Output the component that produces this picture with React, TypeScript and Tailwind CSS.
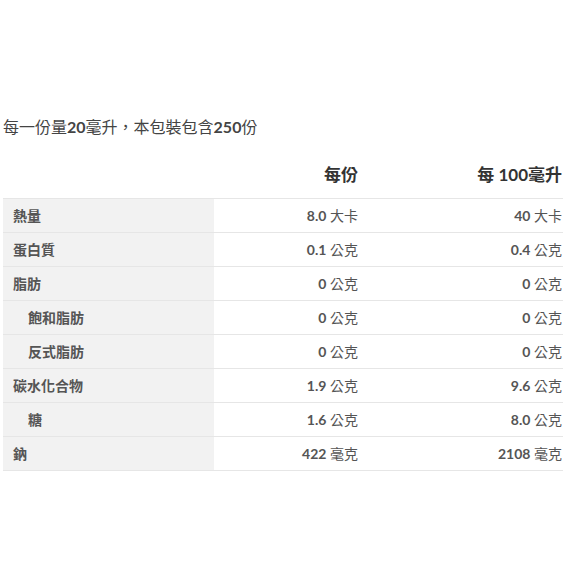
const rows: { label: string; indent?: boolean; per: [string, string]; per100: [string, string] }[] = [
  { label: "熱量", per: ["8.0", "大卡"], per100: ["40", "大卡"] },
  { label: "蛋白質", per: ["0.1", "公克"], per100: ["0.4", "公克"] },
  { label: "脂肪", per: ["0", "公克"], per100: ["0", "公克"] },
  { label: "飽和脂肪", indent: true, per: ["0", "公克"], per100: ["0", "公克"] },
  { label: "反式脂肪", indent: true, per: ["0", "公克"], per100: ["0", "公克"] },
  { label: "碳水化合物", per: ["1.9", "公克"], per100: ["9.6", "公克"] },
  { label: "糖", indent: true, per: ["1.6", "公克"], per100: ["8.0", "公克"] },
  { label: "鈉", per: ["422", "毫克"], per100: ["2108", "毫克"] },
];

function Value({ v }: { v: [string, string] }) {
  return (
    <span>
      <span className="font-bold">{v[0]}</span> <span>{v[1]}</span>
    </span>
  );
}

export default function App() {
  return (
    <div
      className="w-[586px] h-[586px] bg-white text-[#555] pt-[115px] pl-[3px]"
      style={{ fontFamily: "Lato, 'Noto Sans CJK TC', sans-serif" }}
    >
      <p className="text-[16px] leading-[24px] text-[#444]">
        每一份量<span className="font-bold">20</span>毫升，本包裝包含<span className="font-bold">250</span>份
      </p>

      <div className="w-[560px] mt-[16px]">
        <div className="grid grid-cols-[211px_145px_1fr] h-[44px] border-b border-[#e6e6e6] text-[17px] font-bold text-[#333] leading-[24px] pt-[8px]">
          <div />
          <div className="text-right pr-[1px]">每份</div>
          <div className="text-right pr-[1px]">每 100毫升</div>
        </div>
        {rows.map((r) => (
          <div
            key={r.label}
            className="grid grid-cols-[211px_145px_1fr] h-[34px] border-b border-[#e6e6e6] text-[14px] items-center"
          >
            <div className={`h-full flex items-center bg-[#f2f2f2] font-bold ${r.indent ? "pl-[25px]" : "pl-[10px]"}`}>
              {r.label}
            </div>
            <div className="text-right pr-[1px]">
              <Value v={r.per} />
            </div>
            <div className="text-right pr-[1px]">
              <Value v={r.per100} />
            </div>
          </div>
        ))}
      </div>
    </div>
  );
}
